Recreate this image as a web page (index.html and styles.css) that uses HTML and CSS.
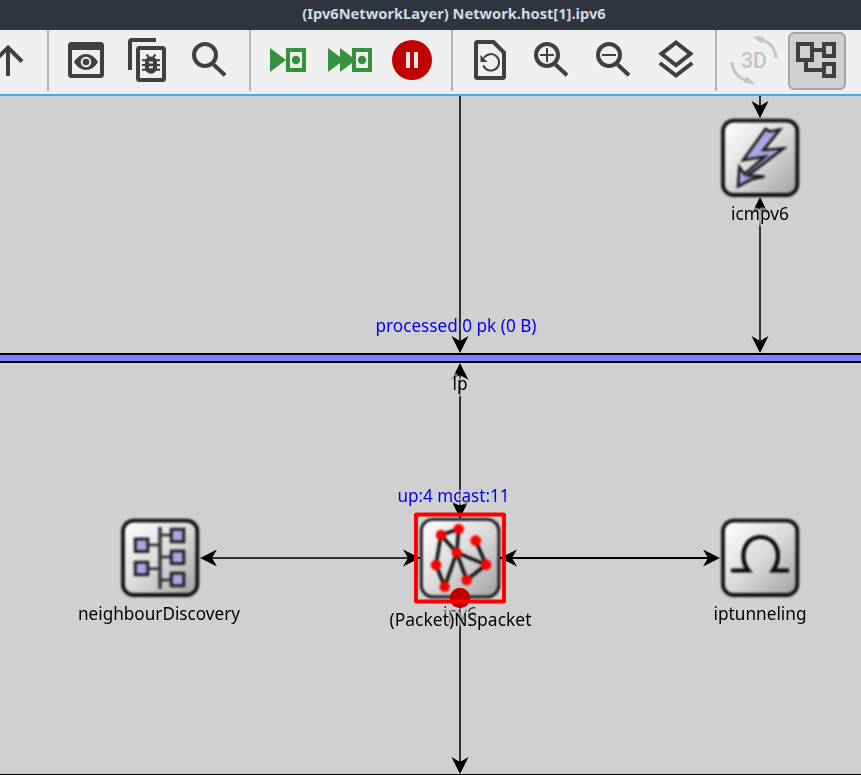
FILE: index.html
```
<!DOCTYPE html>
<html lang="en">
<head>
<meta charset="utf-8">
<title>(Ipv6NetworkLayer) Network.host[1].ipv6</title>
<link rel="stylesheet" href="styles.css">
</head>
<body>
<header class="titlebar"><span class="title">(Ipv6NetworkLayer) Network.host[1].ipv6</span></header>
<nav class="toolbar">
  <div class="group group-first">
    <svg class="icon" viewBox="-23 30 62 62"><path class="s" d="M8 76V47M-6 61.5L8 47.5L22 61.5"/></svg>
  </div>
  <div class="group">
    <svg class="icon" viewBox="55 30 62 62"><rect class="s" x="70" y="44" width="32" height="32" rx="1.5"/><path class="f" d="M69 43h34v7H69zM74 62Q79 54 86 54T98 62Q93 70 86 70T74 62Z"/><circle cx="86" cy="62" r="4.3" fill="#404040" stroke="#efefef" stroke-width="2"/></svg>
    <svg class="icon" viewBox="117 30 62 62"><path class="s" d="M130 70V42Q130 40 132 40H156"/><rect class="s" x="138" y="48" width="26" height="32" rx="1.5"/><rect class="f" x="145" y="56.5" width="12" height="17.3" rx="6"/><path class="s2" d="M142 60.2H160M142 65H160M142 69.8H160M146.500 54.500L149 57.500M155.500 54.500L153 57.500"/><path fill="#efefef" d="M149 61.500h4v2h-4zM149 66.300h4v2h-4z"/></svg>
    <svg class="icon" viewBox="179 30 62 62"><circle class="s" cx="205" cy="55" r="11"/><path class="s" d="M213.500 64.500L225 75.300"/></svg>
  </div>
  <div class="group">
    <svg class="icon" viewBox="257 30 62 62"><path class="g" d="M270 48L286 60L270 72Z"/><rect class="gs" x="288" y="50" width="16" height="20"/><circle class="g" cx="296" cy="60" r="4.200"/></svg>
    <svg class="icon" viewBox="319 30 62 62"><path class="g" d="M328 48L344 60L328 72ZM340 48L356 60L340 72Z"/><rect x="354" y="50" width="16" height="20" fill="#efefef"/><rect class="gs" x="354" y="50" width="16" height="20"/><circle class="g" cx="362" cy="60" r="4.200"/></svg>
    <svg class="icon" viewBox="381 30 62 62"><circle cx="412" cy="60" r="20" fill="#c00000"/><path fill="#e8e8e8" d="M406 52h4v16h-4zM414 52h4v16h-4z"/></svg>
  </div>
  <div class="group">
    <svg class="icon" viewBox="459 30 62 62"><path class="s" d="M477.500 42H493.500L504 52.500V76.500Q504 78 502.500 78H477.500Q476 78 476 76.500V43.500Q476 42 477.500 42Z"/><path class="s2" d="M484 57.800A8.200 8.200 0 1 1 483.300 65.500"/><path class="f" d="M480.500 55V62H487.500Z"/></svg>
    <svg class="icon" viewBox="521 30 62 62"><circle class="s" cx="547" cy="55" r="11"/><path class="s" d="M555.500 64.500L567 75.300"/><path class="s2" d="M540 55H554M547 48V62"/></svg>
    <svg class="icon" viewBox="583 30 62 62"><circle class="s" cx="609" cy="55" r="11"/><path class="s" d="M617.500 64.500L629 75.300"/><path class="s2" d="M602 55H616"/></svg>
    <svg class="icon" viewBox="645 30 62 62"><path class="s" d="M676 42.500L690.500 53.800L676 65.200L661.500 53.800ZM659.800 63L676 75.500L692.200 63"/></svg>
  </div>
  <div class="group group-last">
    <svg class="icon" viewBox="723 30 62 62"><g fill="none" stroke="#c4c4c4" stroke-width="3"><path d="M759 38.500Q775 43 776 58M749 81.500Q733 77 732 62"/></g><path fill="#c4c4c4" d="M752.500 36.500Q758 35.500 764 37.500L762 43.700ZM755.500 83.500Q750 84.500 744 82.500L746 76.300Z"/><text class="t3d" x="741" y="68" textLength="26" lengthAdjust="spacingAndGlyphs">3D</text></svg>
    <svg class="icon" viewBox="785 30 62 62"><rect x="789" y="33" width="56" height="56" rx="5" fill="#d0d0d0" stroke="#a6a6a6" stroke-width="2"/><path class="s" d="M798 44H812V60H798ZM824 44H834V56H824ZM824 64H834V76H824ZM812 50H824M806 60V70H824"/></svg>
  </div>
</nav>
<main class="canvas">
<svg class="diagram" viewBox="0 96 861 679">
  <defs>
    <linearGradient id="face" x1="0" y1="0" x2="1" y2="1"><stop offset=".05" stop-color="#fdfdfd"/><stop offset=".5" stop-color="#dadada"/><stop offset="1" stop-color="#a0a0a0"/></linearGradient>
    <filter id="soft" x="-10%" y="-10%" width="120%" height="120%" color-interpolation-filters="sRGB"><feGaussianBlur stdDeviation=".8"/></filter>
    <path id="head" d="M0 0L-8.500 -17L0 -12L8.500 -17Z"/>
    <rect id="box" x="-37" y="-37.300" width="74.300" height="74.300" rx="10.500" fill="url(#face)" stroke="#111" stroke-width="3.800"/>
  </defs>
  <path class="wire" d="M460 96V345M760 96V110M760 205V345M460 371V518M460 598V766M208 558H420"/>
  <path class="wire dark" d="M500 558H712"/>
  <rect x="-2" y="354" width="865" height="8" fill="#8080ff" stroke="#000" stroke-width="2"/>
  <path d="M0 774.500H861" stroke="#000"/>
  <use href="#head" x="460" y="353"/><use href="#head" x="760" y="118"/><use href="#head" x="760" y="353"/><use href="#head" x="460" y="518"/><use href="#head" x="460" y="774"/>
  <use href="#head" transform="translate(760 197) rotate(180)"/><use href="#head" transform="translate(460 363) rotate(180)"/>
  <use href="#head" transform="translate(200 558) rotate(90)"/><use href="#head" transform="translate(500 558) rotate(90)"/>
  <use href="#head" transform="translate(420 558) rotate(-90)"/><use href="#head" transform="translate(720 558) rotate(-90)"/>
  <g filter="url(#soft)">
    <use href="#box" x="760" y="158"/><use href="#box" x="160" y="558"/><use href="#box" x="760" y="558"/>
    <rect x="421.300" y="519.300" width="77.600" height="77.600" rx="12" fill="url(#face)" stroke="#111" stroke-width="2.800"/>
    <path d="M765.500 129L770 131.500L780 129.500L763.500 150L783.500 148.300L748 175.500L764.500 176.500L751 179.500L738 186.500L739.300 167L744.500 174L765 156.500L743 160.300Z" fill="#a8a8e4" stroke="#181818" stroke-width="2.600"/>
    <path d="M160 527V589" stroke="#484848" stroke-width="4"/>
    <path d="M147 545H160M147 568.700H160M160 535H172M160 557H172M160 580H172" stroke="#282828" stroke-width="2.600"/>
    <g fill="#a8a8e4" stroke="#222226" stroke-width="3"><path d="M135.300 539h12.500v12.500h-12.500zM135.300 562.300h12.500v12.500h-12.500zM171.300 529.300h12.500v12.500h-12.500zM171.300 551h12.500v12.500h-12.500zM171.300 573.300h12.500v12.500h-12.500z"/></g>
    <path d="M731 570.500H748.500C743 564 743 558 743.500 553C745 542.500 752 537 760.500 537C769.500 537 776.500 543 777.800 553C778.500 560 777 565 773 570.500H789" fill="none" stroke="#080808" stroke-width="4.200"/>
    <path d="M441 535L458.700 529L456.700 552.700L441 535L436 565L444.700 586.700L456.700 552.700L466.700 580L486 564.700L456.700 552.700M475.700 540.700L486 564.700" fill="none" stroke="#101010" stroke-width="3.500"/>
    <g fill="#f80000"><circle cx="441" cy="535" r="5.200"/><circle cx="458.700" cy="529" r="5.200"/><circle cx="475.700" cy="540.700" r="5.400"/><circle cx="456.700" cy="552.700" r="5.100"/><circle cx="436" cy="565" r="5.300"/><circle cx="486" cy="564.700" r="5.300"/><circle cx="466.700" cy="580" r="5.200"/><circle cx="444.700" cy="586.700" r="5.200"/></g>
  </g>
  <g class="labels">
    <text x="731" y="220" textLength="58" lengthAdjust="spacingAndGlyphs">icmpv6</text>
    <text class="blue" x="375.500" y="332" textLength="161" lengthAdjust="spacingAndGlyphs">processed 0 pk (0 B)</text>
    <text x="452.500" y="390" textLength="15" lengthAdjust="spacingAndGlyphs">lp</text>
    <text class="blue" x="397.500" y="502" textLength="112" lengthAdjust="spacingAndGlyphs">up:4 mcast:11</text>
    <text x="78" y="620" textLength="162" lengthAdjust="spacingAndGlyphs">neighbourDiscovery</text>
    <text x="713.500" y="620" textLength="93" lengthAdjust="spacingAndGlyphs">iptunneling</text>
    <text x="443" y="620" textLength="34" lengthAdjust="spacingAndGlyphs" opacity=".8">ipv6</text>
    <text x="389.500" y="626" textLength="142" lengthAdjust="spacingAndGlyphs">(Packet)NSpacket</text>
  </g>
  <circle cx="460" cy="598" r="10.200" fill="#c00000"/>
  <rect x="416" y="514.500" width="88" height="87" rx=".5" fill="none" stroke="#f00" stroke-width="4" stroke-linejoin="round"/>
</svg>
</main>
</body>
</html>
```
FILE: styles.css
```
body {
  margin: 0;
  width: 861px;
  height: 775px;
  overflow: hidden;
  display: flex;
  flex-direction: column;
  background: #d0d0d0;
}
.titlebar {
  height: 30px;
  flex: none;
  display: flex;
  justify-content: center;
  padding-left: 47px;
  background: #2f343f;
}
.title {
  font: bold 14.67px/26px "Noto Sans", sans-serif;
  color: #d3dae3;
  white-space: nowrap;
}
.toolbar {
  height: 64px;
  flex: none;
  display: flex;
  align-items: flex-start;
  background: #efefef;
  border-bottom: 2px solid #41ade5;
}
.group {
  display: flex;
  flex: none;
  height: 61px;
  padding: 0 8px 0 6px;
  border-right: 2px solid #b2b2b2;
}
.group-first { margin-left: -23px; padding-left: 0; }
.group-last { border-right: 0; }
.icon { width: 62px; height: 62px; flex: none; display: block; }
.s { fill: none; stroke: #404040; stroke-width: 4; }
.s2 { fill: none; stroke: #404040; stroke-width: 2; }
.f { fill: #404040; }
.g { fill: #37923f; }
.gs { fill: none; stroke: #37923f; stroke-width: 4; }
.t3d { font: 500 21.500px Roboto, sans-serif; fill: #c4c4c4; }
.canvas { flex: 1; min-height: 0; }
.diagram { display: block; width: 861px; height: 679px; }
.wire { fill: none; stroke: #303030; stroke-width: 2; }
.dark { stroke: #000; stroke-width: 2; }
.labels text {
  font: 17.800px "Noto Sans", "Open Sans", sans-serif;
  fill: #000;
  stroke: rgba(208, 208, 208, .6);
  stroke-width: 5px;
  stroke-linejoin: round;
  paint-order: stroke;
}
.labels .blue { fill: #0000f0; }
```
